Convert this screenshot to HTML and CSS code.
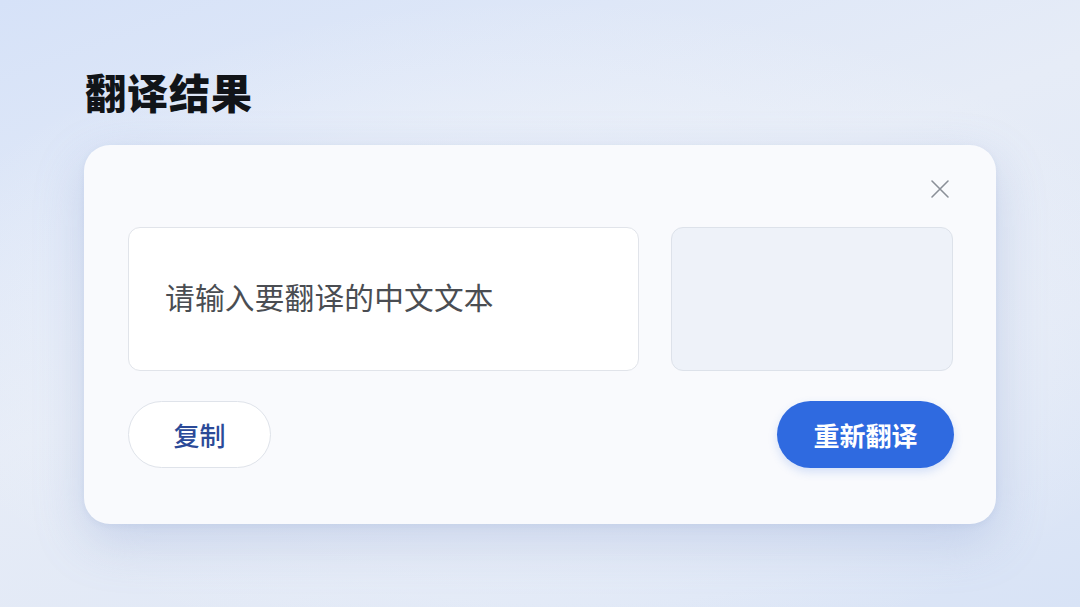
FILE: index.html
```html
<!DOCTYPE html>
<html lang="zh-CN">
<head>
<meta charset="utf-8">
<title>翻译结果</title>
<link rel="stylesheet" href="styles.css">
</head>
<body>
<main class="page">
  <h1 class="title">翻译结果</h1>
  <section class="card">
    <div class="card-head">
      <button class="close" aria-label="关闭">
        <svg width="20" height="20" viewBox="0 0 20 20"><path d="M2 2 L18 18 M18 2 L2 18" stroke="#8a8f98" stroke-width="1.6" fill="none" stroke-linecap="round"/></svg>
      </button>
    </div>
    <div class="boxes">
      <div class="input-box">请输入要翻译的中文文本</div>
      <div class="output-box"></div>
    </div>
    <div class="actions">
      <button class="btn btn-copy">复制</button>
      <button class="btn btn-primary">重新翻译</button>
    </div>
  </section>
</main>
</body>
</html>
```
FILE: styles.css
```css
* { box-sizing: border-box; }
html, body {
  margin: 0;
  height: 100%;
}
body {
  font-family: "Noto Sans CJK SC", "Noto Sans", sans-serif;
  background:
    radial-gradient(ellipse 60% 55% at 50% 55%, #f3f6fb 0%, rgba(243,246,251,0) 100%),
    linear-gradient(160deg, #d6e2f8 0%, #e6ecf7 45%, #e2e9f6 70%, #d8e3f6 100%);
  overflow: hidden;
}
.page {
  width: 1080px;
  height: 607px;
  padding: 63px 0 0 84px;
}
.title {
  margin: 0 0 0 1px;
  font-size: 41px;
  line-height: 57px;
  font-weight: 900;
  color: #111418;
  letter-spacing: 1px;
}
.card {
  margin-top: 25px;
  width: 912px;
  height: 379px;
  background: #f9fafd;
  border-radius: 26px;
  box-shadow: 0 18px 50px rgba(120, 145, 200, 0.28), 0 2px 6px rgba(120, 145, 200, 0.12);
  padding: 34px 42px 0 44px;
}
.card-head {
  display: flex;
  justify-content: flex-end;
  height: 20px;
  padding-right: 4px;
}
.close {
  border: 0;
  background: none;
  padding: 0;
  width: 20px;
  height: 20px;
  cursor: pointer;
}
.close svg { display: block; }
.boxes {
  margin-top: 28px;
  display: grid;
  grid-template-columns: 511px 282px;
  column-gap: 32px;
  height: 144px;
}
.input-box {
  background: #ffffff;
  border: 1px solid #e1e4ea;
  border-radius: 12px;
  display: flex;
  align-items: center;
  padding-left: 36px;
  padding-bottom: 5px;
  font-size: 29.7px;
  color: #4a4d52;
  letter-spacing: 0.2px;
}
.output-box {
  background: #eef2f9;
  border: 1px solid #dde2ea;
  border-radius: 12px;
}
.actions {
  margin-top: 30px;
  display: flex;
  justify-content: space-between;
  align-items: center;
}
.btn {
  height: 67px;
  border-radius: 34px;
  font-family: "Noto Sans CJK SC", "Noto Sans", sans-serif;
  font-size: 26px;
  cursor: pointer;
}
.btn-copy {
  width: 143px;
  background: #ffffff;
  border: 1px solid #dfe3ea;
  color: #2b4a98;
  font-weight: 500;
}
.btn-primary {
  width: 177px;
  background: #2f6ae0;
  border: 0;
  color: #ffffff;
  font-weight: 700;
  box-shadow: 0 4px 10px rgba(47, 106, 224, 0.18);
}
```
